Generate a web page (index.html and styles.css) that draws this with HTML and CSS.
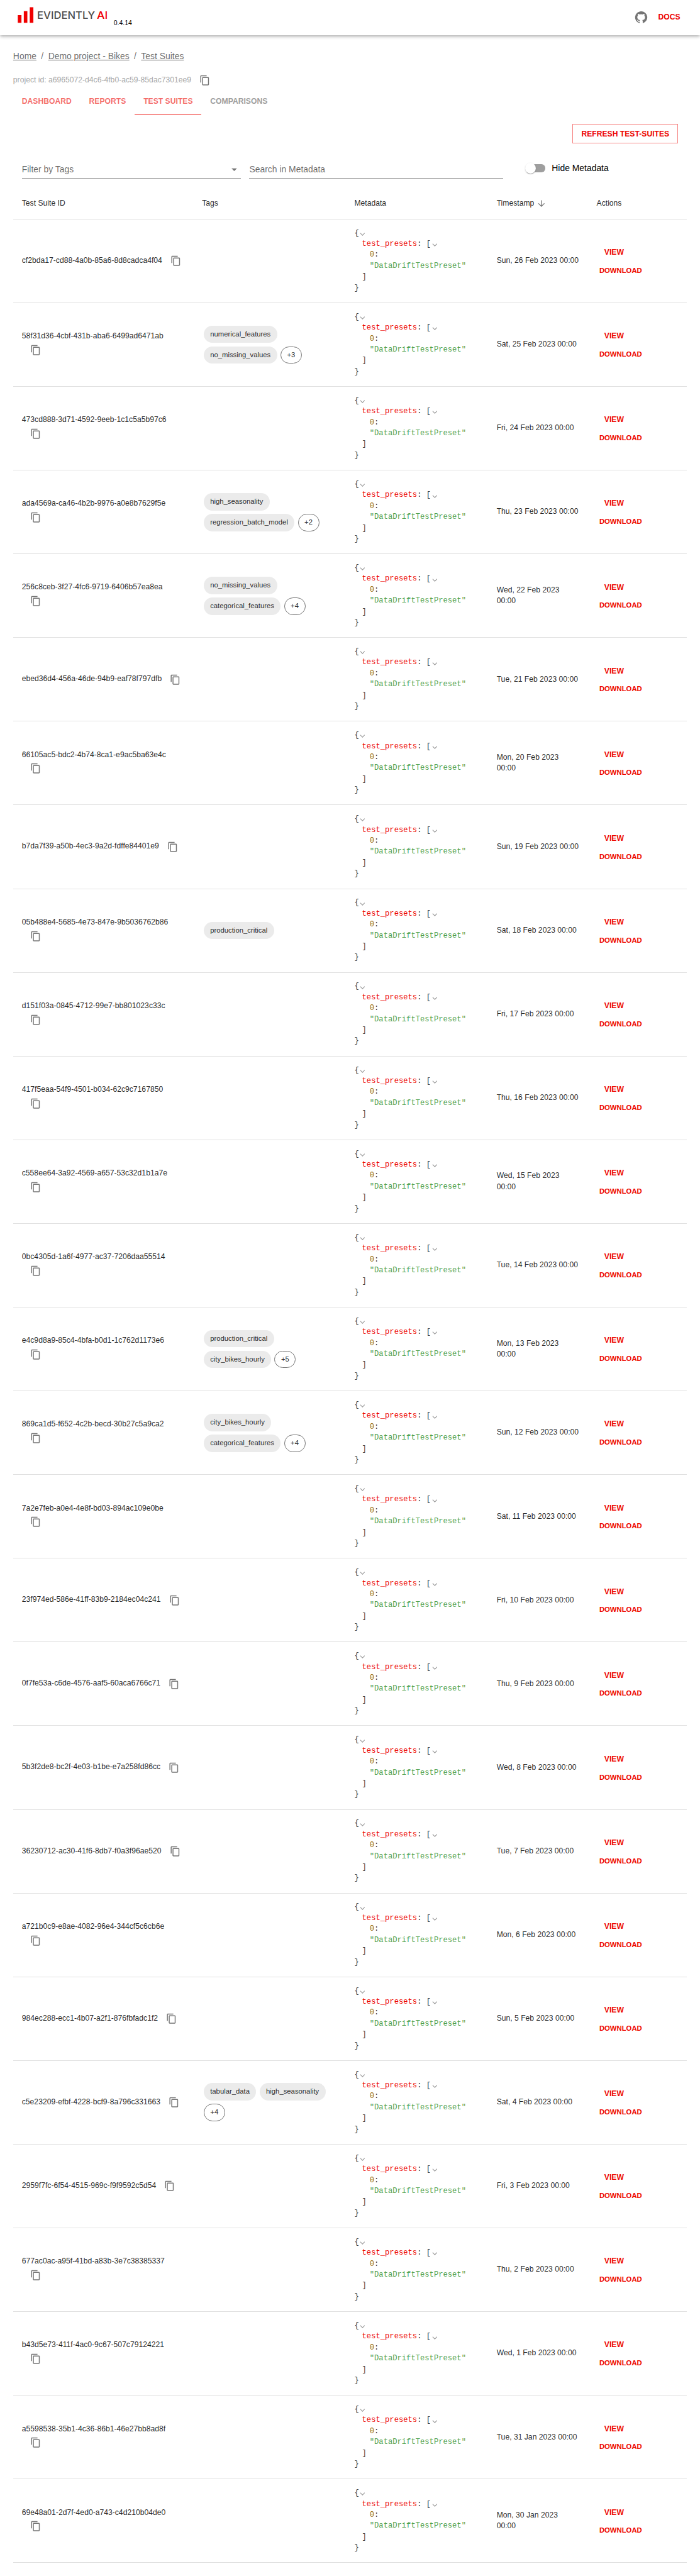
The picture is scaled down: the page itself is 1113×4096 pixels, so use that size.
FILE: index.html
```html
<!DOCTYPE html>
<html lang="en">
<head>
<meta charset="utf-8">
<title>Evidently AI - Test Suites</title>
<link rel="stylesheet" href="styles.css">
</head>
<body>
<svg class="sprite" aria-hidden="true">
  <symbol id="copy" viewBox="0 0 24 24"><path d="M16 1H4c-1.1 0-2 .9-2 2v14h2V3h12V1zm3 4H8c-1.1 0-2 .9-2 2v14c0 1.100.9 2 2 2h11c1.100 0 2-.9 2-2V7c0-1.100-.9-2-2-2zm0 16H8V7h11v14z"/></symbol>
  <symbol id="chevron" viewBox="0 0 10 10"><path d="M1 3l4 4 4-4" fill="none" stroke="currentColor" stroke-width="1.300"/></symbol>
</svg>
<header class="appbar">
  <div class="brand">
    <svg class="logo" viewBox="0 0 166 32" role="img" aria-label="Evidently AI">
      <g fill="#f00000"><path d="M.3 16h6.700v14.300H.3zM11.300 9h6.500v21.300h-6.500zM22.200 1.700h6.600v28.600h-6.600z"/></g>
      <text class="logo-name" x="35.700" y="23.400" textLength="106" lengthAdjust="spacingAndGlyphs">EVIDENTLY</text>
      <text class="logo-ai" x="145" y="23.400" textLength="20" lengthAdjust="spacingAndGlyphs">AI</text>
    </svg>
    <span class="version">0.4.14</span>
  </div>
  <nav class="links">
    <svg class="github" viewBox="0 0 24 24"><path d="M12 1.270a11 11 0 00-3.480 21.460c.55.09.73-.28.73-.55v-1.840c-3.030.64-3.670-1.460-3.670-1.460-.55-1.290-1.280-1.650-1.280-1.650-.92-.65.1-.65.1-.65 1.100 0 1.730 1.100 1.730 1.100.92 1.650 2.570 1.200 3.210.92a2 2 0 01.64-1.470c-2.470-.27-5.040-1.190-5.040-5.500 0-1.100.46-2.100 1.200-2.840a3.760 3.760 0 010-2.930s.91-.28 3.110 1.100c1.800-.49 3.700-.49 5.500 0 2.100-1.380 3.020-1.100 3.020-1.100a3.760 3.760 0 01.1 2.930c.83.74 1.200 1.740 1.200 2.940 0 4.210-2.570 5.130-5.040 5.400.45.37.82.92.82 2.020v3.030c0 .27.1.64.73.55A11 11 0 0012 1.270"/></svg>
    <a class="docs">DOCS</a>
  </nav>
</header>
<main>
  <nav class="crumbs"><a>Home</a><span>/</span><a>Demo project - Bikes</a><span>/</span><a>Test Suites</a></nav>
  <div class="project">project id: a6965072-d4c6-4fb0-ac59-85dac7301ee9<span class="copy"><svg><use href="#copy"/></svg></span></div>
  <nav class="tabs">
    <a class="tab">DASHBOARD</a><a class="tab">REPORTS</a><a class="tab active">TEST SUITES</a><a class="tab disabled">COMPARISONS</a>
  </nav>
  <div class="toolbar"><button class="refresh">REFRESH TEST-SUITES</button></div>
  <div class="filters">
    <div class="field tags-field"><span>Filter by Tags</span><svg viewBox="0 0 24 24"><path d="M7 10l5 5 5-5z"/></svg></div>
    <div class="field search-field"><span>Search in Metadata</span></div>
    <div class="switch"><i class="track"><i class="thumb"></i></i><span>Hide Metadata</span></div>
  </div>
  <section class="table">
    <div class="row head">
      <div>Test Suite ID</div><div>Tags</div><div>Metadata</div>
      <div class="sorted">Timestamp<svg viewBox="0 0 24 24"><path d="M20 12l-1.410-1.410L13 16.170V4h-2v12.170l-5.580-5.590L4 12l8 8 8-8z"/></svg></div>
      <div>Actions</div>
    </div>
    <div id="rows"></div>
  </section>
</main>
<script src="rows.js"></script>
</body>
</html>
```
FILE: styles.css
```css
/* 1rem stands for ten design pixels */
html { font-size: 8.695px; }
body {
  margin: 0;
  background: #fff;
  color: rgba(0, 0, 0, .87);
  font: 1.4rem/2.002rem "Liberation Sans", Arial, sans-serif;
}
* { box-sizing: border-box; }
svg { fill: currentColor; display: block; flex: none; }
.sprite { position: absolute; width: 0; height: 0; }

.appbar {
  height: 6.4rem;
  padding: 0 2.8rem 0 3.2rem;
  display: flex;
  justify-content: space-between;
  box-shadow: 0 .2rem .4rem -.1rem rgba(0,0,0,.2), 0 .4rem .5rem rgba(0,0,0,.14), 0 .1rem 1rem rgba(0,0,0,.12);
}
.brand { display: flex; }
.logo { width: 16.6rem; height: 3.2rem; margin-top: 1.2rem; }
.logo-name, .logo-ai { font: 500 19px Inter, sans-serif; }
.logo-name { fill: #4d4d4d; }
.logo-ai { fill: #f00000; }
.version { margin: 3.250rem 0 0 1rem; color: #000; font-size: 1.2rem; }
.links { display: flex; align-items: center; }
.github { width: 2.4rem; height: 2.4rem; color: #757575; }
.docs { padding: 0 .8rem 0 1.950rem; color: #ed0400; font-weight: 700; }

main { padding: 2.7rem 2.4rem 0; }
.crumbs { display: flex; gap: .85rem; height: 2.4rem; line-height: 2.4rem; font-size: 1.6rem; color: rgba(0,0,0,.6); }
.crumbs a { text-decoration: underline; }
.project { display: flex; align-items: center; height: 3rem; margin-top: 1.680rem; color: #a6a6a6; }
.copy { display: inline-flex; vertical-align: middle; margin-left: 1rem; padding: .5rem; color: #757575; }
.copy svg { width: 2rem; height: 2rem; }

.tabs { display: flex; height: 4.8rem; color: rgba(237, 4, 0, .6); font-weight: 700; }
.tab { padding: 1.370rem 1.6rem 0; }
.tab.active { border-bottom: .2rem solid #ed0400; }
.tab.disabled { color: #9e9e9e; }

.toolbar { display: flex; justify-content: flex-end; padding: 1.650rem 1.6rem 0 0; }
.refresh {
  height: 3.650rem; padding: 0 1.5rem;
  border: 1px solid #f68280; background: none;
  color: #ed0400; font: 700 1.4rem "Liberation Sans", sans-serif;
}
.filters { display: flex; height: 8.1rem; padding: 3.150rem 1.6rem 0; font-size: 1.6rem; color: rgba(0,0,0,.6); }
.field { display: flex; align-items: center; justify-content: space-between; height: 3.2rem; border-bottom: 1px solid #949494; }
.tags-field { width: 40rem; margin-right: 1.6rem; }
.tags-field svg { width: 2.4rem; height: 2.4rem; color: #757575; }
.search-field { width: 46.4rem; }
.switch { display: flex; align-items: center; height: 2.7rem; margin-left: 4.3rem; color: #000; }
.track { width: 3.4rem; height: 1.4rem; margin-right: 1.2rem; border-radius: .7rem; background: #9e9e9e; display: flex; align-items: center; }
.thumb {
  width: 2rem; height: 2rem; margin-left: -.3rem; border-radius: 50%; background: #fff;
  box-shadow: 0 .2rem .1rem -.1rem rgba(0,0,0,.2), 0 .1rem .1rem rgba(0,0,0,.14), 0 .1rem .3rem rgba(0,0,0,.12);
}

.row {
  display: grid;
  grid-template-columns: 32.940rem 27.860rem 26.020rem 18.280rem 1fr;
  align-items: center;
  height: 15.307rem;
  border-bottom: 1px solid #e0e0e0;
}
.row > div { padding: 0 1.6rem; }
.row.head { height: 5.740rem; }
.row > .sorted { display: flex; align-items: center; padding-top: .2rem; }
.sorted svg { width: 1.8rem; height: 1.8rem; margin-left: .4rem; color: #757575; }
.id span.below { display: flex; width: 4rem; }
.chips { display: flex; flex-wrap: wrap; }
.chip {
  height: 3.2rem; line-height: 3.150rem; margin: .3rem; padding: 0 1.2rem;
  border-radius: 1.6rem; background: #ebebeb; font-size: 1.3rem;
}
.chip.more { padding: 0 1.1rem; border: 1px solid #757575; background: none; line-height: 2.9rem; }
.json { font-family: "Liberation Mono", monospace; color: #383a42; }
.json p { margin: 0; display: flex; align-items: center; white-space: pre; height: 2.002rem; }
.json svg { width: 1rem; height: 1rem; margin: .2rem 0 0 .2rem; color: #999; }
.json .in1 { padding-left: 1.4rem; }
.json .in2 { padding-left: 2.8rem; }
.key { color: #ed0400; }
.index { color: #986801; }
.str { color: #50a14f; }
.actions { display: flex; flex-direction: column; align-items: flex-start; color: #ed0400; font-weight: 700; }
.view { width: 6.4rem; height: 3.650rem; line-height: 3.650rem; text-align: center; }
.download { height: 2.950rem; line-height: 2.850rem; padding: 0 .5rem; font-size: 1.3rem; }
```
FILE: rows.js
```js
// id, timestamp, tags, number of further tags
const suites = [
  ["cf2bda17-cd88-4a0b-85a6-8d8cadca4f04", "Sun, 26 Feb 2023"],
  ["58f31d36-4cbf-431b-aba6-6499ad6471ab", "Sat, 25 Feb 2023", ["numerical_features", "no_missing_values"], 3],
  ["473cd888-3d71-4592-9eeb-1c1c5a5b97c6", "Fri, 24 Feb 2023"],
  ["ada4569a-ca46-4b2b-9976-a0e8b7629f5e", "Thu, 23 Feb 2023", ["high_seasonality", "regression_batch_model"], 2],
  ["256c8ceb-3f27-4fc6-9719-6406b57ea8ea", "Wed, 22 Feb 2023", ["no_missing_values", "categorical_features"], 4],
  ["ebed36d4-456a-46de-94b9-eaf78f797dfb", "Tue, 21 Feb 2023"],
  ["66105ac5-bdc2-4b74-8ca1-e9ac5ba63e4c", "Mon, 20 Feb 2023"],
  ["b7da7f39-a50b-4ec3-9a2d-fdffe84401e9", "Sun, 19 Feb 2023"],
  ["05b488e4-5685-4e73-847e-9b5036762b86", "Sat, 18 Feb 2023", ["production_critical"]],
  ["d151f03a-0845-4712-99e7-bb801023c33c", "Fri, 17 Feb 2023"],
  ["417f5eaa-54f9-4501-b034-62c9c7167850", "Thu, 16 Feb 2023"],
  ["c558ee64-3a92-4569-a657-53c32d1b1a7e", "Wed, 15 Feb 2023"],
  ["0bc4305d-1a6f-4977-ac37-7206daa55514", "Tue, 14 Feb 2023"],
  ["e4c9d8a9-85c4-4bfa-b0d1-1c762d1173e6", "Mon, 13 Feb 2023", ["production_critical", "city_bikes_hourly"], 5],
  ["869ca1d5-f652-4c2b-becd-30b27c5a9ca2", "Sun, 12 Feb 2023", ["city_bikes_hourly", "categorical_features"], 4],
  ["7a2e7feb-a0e4-4e8f-bd03-894ac109e0be", "Sat, 11 Feb 2023"],
  ["23f974ed-586e-41ff-83b9-2184ec04c241", "Fri, 10 Feb 2023"],
  ["0f7fe53a-c6de-4576-aaf5-60aca6766c71", "Thu, 9 Feb 2023"],
  ["5b3f2de8-bc2f-4e03-b1be-e7a258fd86cc", "Wed, 8 Feb 2023"],
  ["36230712-ac30-41f6-8db7-f0a3f96ae520", "Tue, 7 Feb 2023"],
  ["a721b0c9-e8ae-4082-96e4-344cf5c6cb6e", "Mon, 6 Feb 2023"],
  ["984ec288-ecc1-4b07-a2f1-876fbfadc1f2", "Sun, 5 Feb 2023"],
  ["c5e23209-efbf-4228-bcf9-8a796c331663", "Sat, 4 Feb 2023", ["tabular_data", "high_seasonality"], 4],
  ["2959f7fc-6f54-4515-969c-f9f9592c5d54", "Fri, 3 Feb 2023"],
  ["677ac0ac-a95f-41bd-a83b-3e7c38385337", "Thu, 2 Feb 2023"],
  ["b43d5e73-411f-4ac0-9c67-507c79124221", "Wed, 1 Feb 2023"],
  ["a5598538-35b1-4c36-86b1-46e27bb8ad8f", "Tue, 31 Jan 2023"],
  ["69e48a01-2d7f-4ed0-a743-c4d210b04de0", "Mon, 30 Jan 2023"],
];

// ids short enough to keep the copy button on their own line
const inlineCopy = new Set([0, 5, 7, 16, 17, 18, 19, 21, 22, 23]);
const chevron = '<svg><use href="#chevron"/></svg>';

document.getElementById("rows").innerHTML = suites.map(([id, day, tags = [], more], i) => {
  const chips = tags.map(t => `<span class="chip">${t}</span>`).join("")
    + (more ? `<span class="chip more">+${more}</span>` : "");
  const gap = /^(Mon|Wed), \d\d/.test(day) ? "<br>" : " ";
  return `<div class="row">
    <div class="id">${id}<span class="copy${inlineCopy.has(i) ? "" : " below"}"><svg><use href="#copy"/></svg></span></div>
    <div><div class="chips">${chips}</div></div>
    <div class="json"><p>{${chevron}</p><p class="in1"><span class="key">test_presets</span>: [${chevron}</p><p class="in2"><span class="index">0</span>:</p><p class="in2 str">"DataDriftTestPreset"</p><p class="in1">]</p><p>}</p></div>
    <div>${day}${gap}00:00</div>
    <div class="actions"><span class="view">VIEW</span><span class="download">DOWNLOAD</span></div>
  </div>`;
}).join("");
```
